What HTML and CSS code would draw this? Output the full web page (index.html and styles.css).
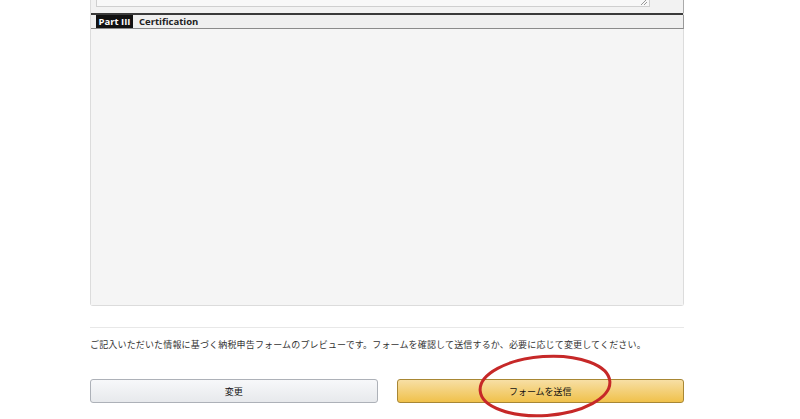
FILE: index.html
```html
<!DOCTYPE html>
<html lang="ja">
<head>
<meta charset="utf-8">
<title>Preview</title>
<link rel="stylesheet" href="styles.css">
</head>
<body>
<div class="page">
  <div class="panel">
    <div class="pv-top">
      <div class="ta">
        <svg class="grip" width="8" height="6" viewBox="0 0 8 6"><path d="M1 6 L7 0 M4 6 L7 3" stroke="#999" stroke-width="1" fill="none"/></svg>
      </div>
    </div>
    <div class="rule"></div>
    <div class="part-row">
      <span class="part-label">Part III</span>
      <span class="part-title">Certification</span>
    </div>
    <div class="pv-body"></div>
  </div>
  <div class="sep"></div>
  <p class="note">ご記入いただいた情報に基づく納税申告フォームのプレビューです。フォームを確認して送信するか、必要に応じて変更してください。</p>
  <div class="actions">
    <button class="btn btn-grey">変更</button>
    <button class="btn btn-yellow">フォームを送信</button>
  </div>
</div>
<svg class="circle" width="150" height="76" viewBox="0 0 150 76">
  <ellipse cx="75" cy="38" rx="65" ry="29.5" transform="rotate(-4 75 38)" fill="none" stroke="#c62828" stroke-width="3"/>
</svg>
</body>
</html>
```

FILE: styles.css
```css
html, body {
  margin: 0;
  padding: 0;
  background: #fff;
  font-family: "Noto Sans CJK JP", "Noto Sans", sans-serif;
  color: #333;
  overflow: hidden;
}
.page {
  width: 594px;
  margin-left: 90px;
}
.panel {
  box-sizing: border-box;
  height: 306px;
  border: 1px solid #dcdcdc;
  border-top: none;
  border-radius: 0 0 3px 3px;
  background: #f5f5f5;
  display: flex;
  flex-direction: column;
}
.pv-top {
  height: 13px;
  padding-left: 5px;
  background: #f2f2f2;
  border-right: 1px solid #aaa;
  margin-right: -1px;
}
.ta {
  position: relative;
  box-sizing: border-box;
  width: 554px;
  height: 7px;
  border: 1px solid #cfcfcf;
  border-top: none;
  background: #f8f8f8;
}
.grip {
  position: absolute;
  right: 1px;
  bottom: 1px;
}
.rule {
  height: 2px;
  background: #3a3a3a;
}
.part-row {
  box-sizing: border-box;
  height: 14px;
  border-bottom: 1px solid #8a8a8a;
  border-right: 1px solid #999;
  margin-right: -1px;
  background: #efefef;
  display: flex;
  align-items: stretch;
  padding-left: 5px;
  font-family: "Open Sans", "DejaVu Sans", sans-serif;
  font-weight: 700;
  font-size: 9.5px;
  line-height: 13px;
}
.part-label {
  background: #111;
  color: #fff;
  width: 37px;
  text-align: center;
}
.part-title {
  color: #222;
  margin-left: 6px;
}
.pv-body {
  flex: 1;
  background: #f5f5f5;
}
.sep {
  margin-top: 21px;
  border-top: 1px solid #e8e8e8;
}
.note {
  margin: 11px 0 0;
  font-size: 9px;
  line-height: 12px;
  letter-spacing: 0.16px;
  color: #333;
  white-space: nowrap;
}
.actions {
  margin-top: 28px;
  display: grid;
  grid-template-columns: 1fr 1fr;
  column-gap: 19px;
}
.btn {
  box-sizing: border-box;
  height: 24px;
  border-radius: 3px;
  font-family: "Noto Sans CJK JP", "Noto Sans", sans-serif;
  font-size: 9px;
  color: #111;
  padding: 0;
  cursor: pointer;
}
.btn-grey {
  border: 1px solid #adb1b8;
  background: linear-gradient(#f7f8fa, #e7e9ec);
}
.btn-yellow {
  border: 1px solid #a88734;
  background: linear-gradient(#f7dfa5, #f0c14b);
}
.circle {
  position: absolute;
  left: 470px;
  top: 348px;
}
```
